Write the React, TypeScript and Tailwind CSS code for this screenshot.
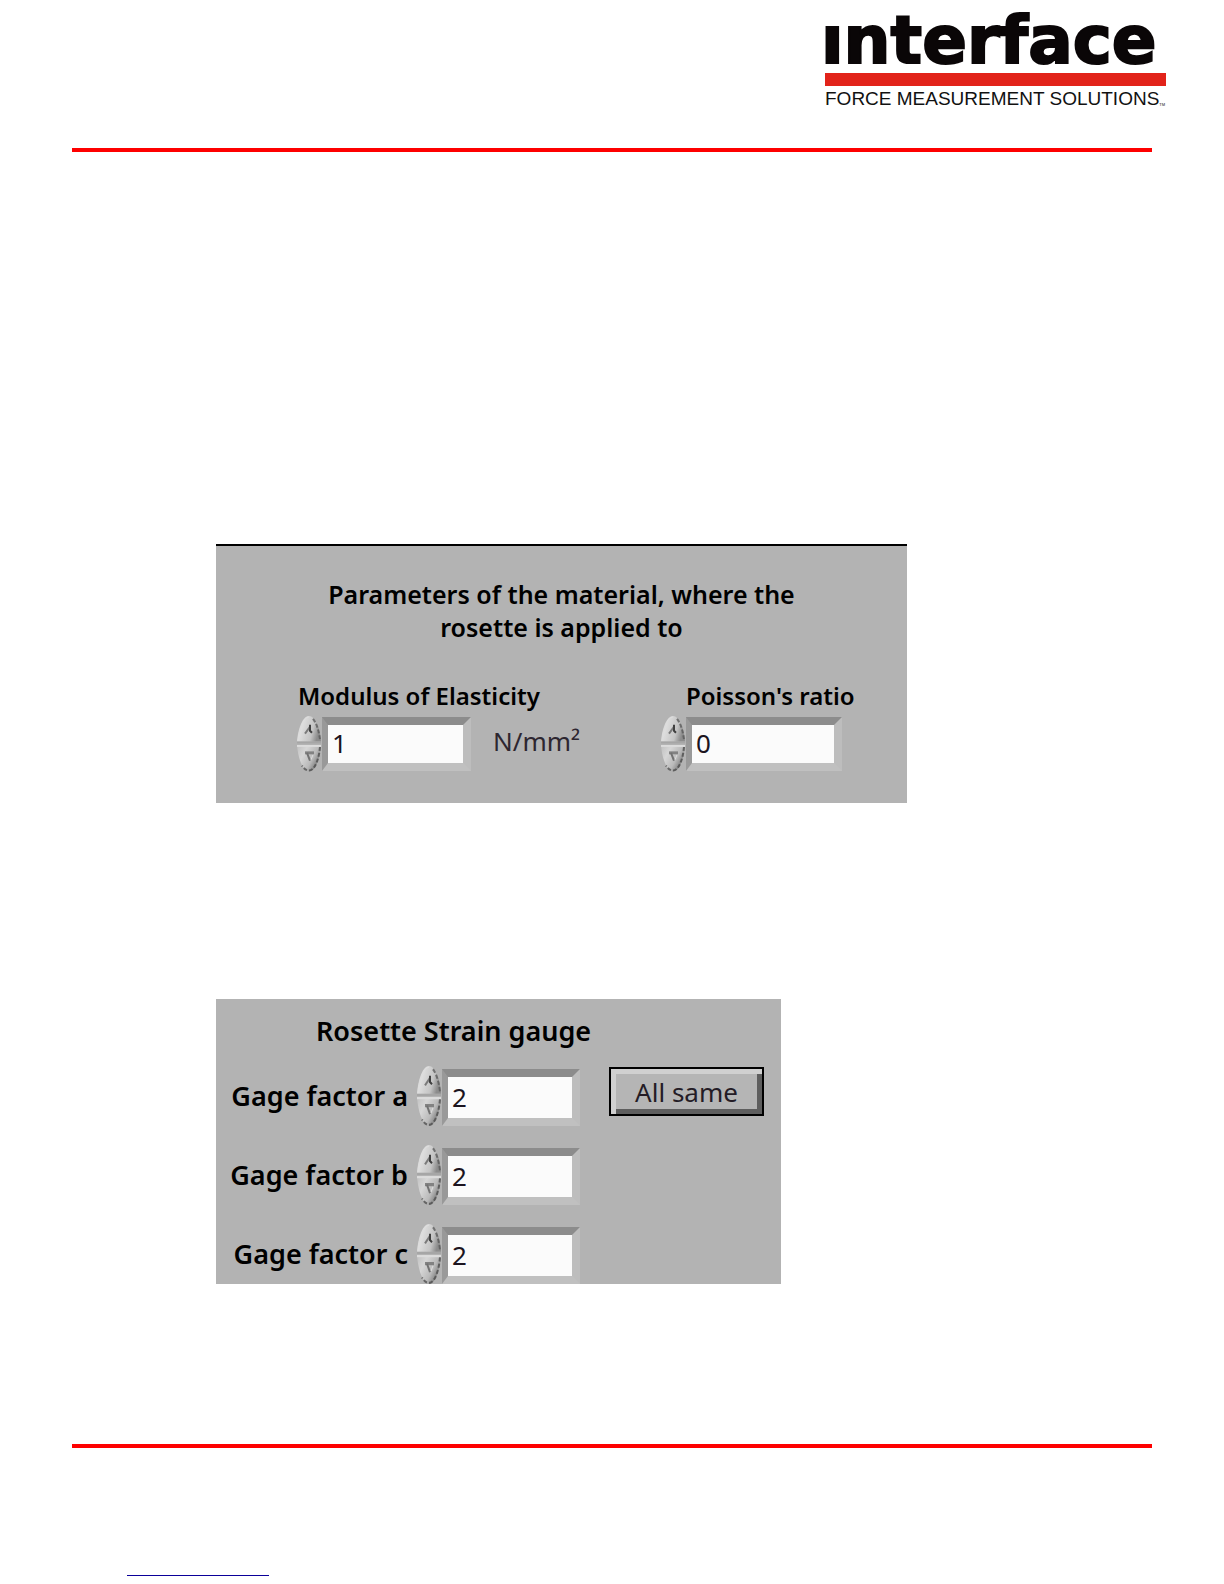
import React from "react";

function StepGlyph({ down = false }: { down?: boolean }) {
  return (
    <svg viewBox="0 0 26 29" preserveAspectRatio="none" className="block h-full w-full" aria-hidden="true">
      <defs>
        <linearGradient id="stepUp" x1="0" y1="0" x2="1" y2="0.3">
          <stop offset="0" stopColor="#bdbdbd" />
          <stop offset="0.3" stopColor="#dedede" />
          <stop offset="0.75" stopColor="#c4c4c4" />
          <stop offset="1" stopColor="#8c8c8c" />
        </linearGradient>
        <linearGradient id="stepDown" x1="0" y1="0" x2="1" y2="0.6">
          <stop offset="0" stopColor="#c0c0c0" />
          <stop offset="0.35" stopColor="#d6d6d6" />
          <stop offset="0.7" stopColor="#bababa" />
          <stop offset="1" stopColor="#707070" />
        </linearGradient>
      </defs>
      {down ? (
        <>
          <path d="M1 1 H25 C24 15 19 28 13 28 C7 28 2 15 1 1Z" fill="url(#stepDown)" />
          <path d="M24 3 C23 15 19 27 13 27 C10 27 8 25 6 22" fill="none" stroke="#484848" strokeOpacity="0.75" strokeWidth="2" strokeDasharray="4 2" />
          <path d="M1 2 H25" stroke="#dcdcdc" strokeWidth="2" />
          <path d="M9 9 H18" stroke="#828282" strokeWidth="3" />
          <path d="M11 9 L14 17" fill="none" stroke="#727272" strokeWidth="2" />
          <path d="M17 11 L15 16" fill="none" stroke="#dddddd" strokeWidth="1" />
        </>
      ) : (
        <>
          <path d="M1 27 C2 13 7 1 13 1 C19 1 24 13 25 27Z" fill="url(#stepUp)" />
          <path d="M2 26 C3 13 8 2 13 2" fill="none" stroke="#dddddd" strokeWidth="1" />
          <path d="M17 4 C21 9 23 17 24 25" fill="none" stroke="#555555" strokeOpacity="0.75" strokeWidth="2" strokeDasharray="4 2" />
          <path d="M1 28 H25" stroke="#a6a6a6" strokeWidth="2" />
          <path d="M9 19 L14 12" stroke="#7a7a7a" strokeWidth="2" />
          <path d="M14 10 L14 16 L16 18" fill="none" stroke="#3f3f3f" strokeWidth="2" />
        </>
      )}
    </svg>
  );
}

function NumericControl({
  id,
  value,
  tall = false,
  fieldClass,
}: {
  id: string;
  value: string;
  tall?: boolean;
  fieldClass: string;
}) {
  const [text, setText] = React.useState(value);
  const step = (by: number) => setText(String((Number(text) || 0) + by));
  return (
    <div className={tall ? "flex h-[62px] items-end" : "flex h-[57px] items-end"}>
      <div className="flex h-full w-[26px] flex-col">
        <button type="button" aria-label="Increase" onClick={() => step(1)} className="min-h-0 flex-1">
          <StepGlyph />
        </button>
        <button type="button" aria-label="Decrease" onClick={() => step(-1)} className="min-h-0 flex-1">
          <StepGlyph down />
        </button>
      </div>
      <input
        id={id}
        value={text}
        onChange={(e) => setText(e.target.value)}
        className={`mb-px border-8 border-l-6 border-t-[#8c8c8c] border-r-[#bdbdbd] border-b-[#c0c0c0] border-l-[#999999] bg-[#fbfbfb] pb-[2px] pl-1 text-[26px] leading-8 text-[#1c1420] outline-none ${fieldClass}`}
      />
    </div>
  );
}

const gages = ["a", "b", "c"];

export default function App() {
  return (
    <div className="flex min-h-screen flex-col bg-white px-[72px] font-['Noto_Sans','Open_Sans',sans-serif] text-black">
      <header className="flex h-[152px] justify-end border-b-4 border-[#fe0000]">
        <div className="-mr-4 flex w-[343px] flex-col">
          <div
            aria-label="Interface"
            className="mt-2 -ml-1 h-16 font-['DejaVu_Sans',sans-serif] text-[66px] leading-[66px] font-bold whitespace-nowrap text-[#0a0607] [-webkit-text-stroke:2px_#0a0607]"
          >
            ınterface
          </div>
          <div className="mt-px h-[13px] w-[341px] bg-[#e2231a]" />
          <div className="mt-px flex items-end font-['Liberation_Sans',sans-serif] text-[19px] leading-6 whitespace-nowrap text-[#111111]">
            FORCE MEASUREMENT SOLUTIONS<span className="text-[4px] leading-3">TM</span>
          </div>
        </div>
      </header>

      <main className="ml-36 flex-1">
        <section className="mt-[392px] h-[259px] max-w-[691px] border-t-2 border-black bg-[#b3b3b3]">
          <h2 className="pt-8 text-center text-[25px] leading-[33px] font-semibold">
            Parameters of the material, where the
            <br />
            rosette is applied to
          </h2>
          <div className="mt-9 flex pl-20">
            <div className="w-[364px]">
              <label htmlFor="modulus" className="block h-[35px] pl-[2px] text-[24px] leading-8 font-semibold">
                Modulus of Elasticity
              </label>
              <div className="flex items-center">
                <NumericControl id="modulus" value="1" fieldClass="h-[54px] w-[149px]" />
                <span className="pb-[6px] pl-[22px] text-[26px] leading-8 text-[#2d2630]">N/mm²</span>
              </div>
            </div>
            <div>
              <label htmlFor="poisson" className="block h-[35px] pl-[26px] text-[24px] leading-8 font-semibold">
                Poisson's ratio
              </label>
              <NumericControl id="poisson" value="0" fieldClass="h-[54px] w-[156px]" />
            </div>
          </div>
        </section>

        <section className="mt-[196px] h-[285px] max-w-[565px] overflow-hidden bg-[#b3b3b3]">
          <h2 className="pt-[14px] pl-[100px] text-[27px] leading-9 font-semibold">Rosette Strain gauge</h2>
          <div className="mt-4 flex items-start">
            <div className="flex flex-col gap-[17px]">
              {gages.map((g) => (
                <div key={g} className="flex items-center">
                  <label htmlFor={`gage-${g}`} className="w-[200px] pr-2 text-right text-[27px] leading-8 font-semibold whitespace-nowrap">
                    Gage factor {g}
                  </label>
                  <NumericControl id={`gage-${g}`} value="2" tall fieldClass="h-[57px] w-[138px]" />
                </div>
              ))}
            </div>
            <button
              type="button"
              className="mt-[2px] ml-[29px] h-[49px] w-[155px] border-2 border-black bg-[#b5b5b5] text-[26px] leading-8 text-[#241c26] shadow-[inset_5px_5px_0_#d0d0d0,inset_-5px_-5px_0_#5e5e5e]"
            >
              All same
            </button>
          </div>
        </section>
      </main>

      <footer className="h-[140px] border-t-4 border-[#fe0000]">
        <a href="#top" aria-label="Website" className="ml-[55px] block h-32 w-[142px] border-b border-[#0b0099]" />
      </footer>
    </div>
  );
}
